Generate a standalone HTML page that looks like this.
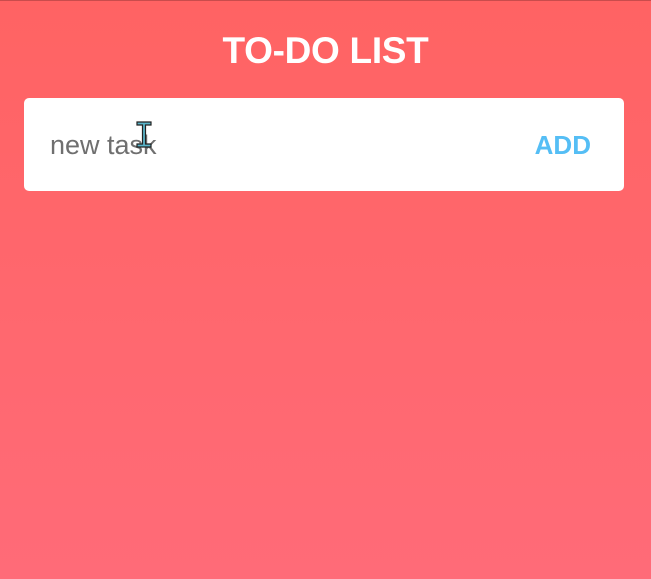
<!DOCTYPE html>
<html><head><style>
html,body{margin:0;padding:0}
body{width:651px;height:579px;overflow:hidden;background:linear-gradient(#ff6363,#ff6b78);font-family:"Liberation Sans",sans-serif;position:relative;border-top:1px solid #c94c4c;box-sizing:border-box}
h1{position:absolute;top:28px;left:0;width:651px;text-align:center;margin:0;color:#fff;font-size:37px;font-weight:bold;line-height:44px;letter-spacing:-0.3px}
.card{position:absolute;left:24px;top:97px;width:600px;height:93px;background:#fff;border-radius:5px}
.ph{position:absolute;left:26px;top:31px;font-size:27px;color:#6f6f6f;line-height:32px}
.add{position:absolute;right:33px;top:31px;font-size:26px;font-weight:bold;color:#55bef5;line-height:32px}
.cur{position:absolute;left:136px;top:120px;width:16px;height:27px}
</style></head><body>
<h1>TO-DO LIST</h1>
<div class="card"><div class="ph">new task</div><div class="add">ADD</div></div>
<svg class="cur" viewBox="0 0 16 27"><path d="M1 1h14v3H9.5v19H15v3H1v-3h5.5V4H1z" fill="#5ab4c8" stroke="#222" stroke-width="1.2"/></svg>
</body></html>
